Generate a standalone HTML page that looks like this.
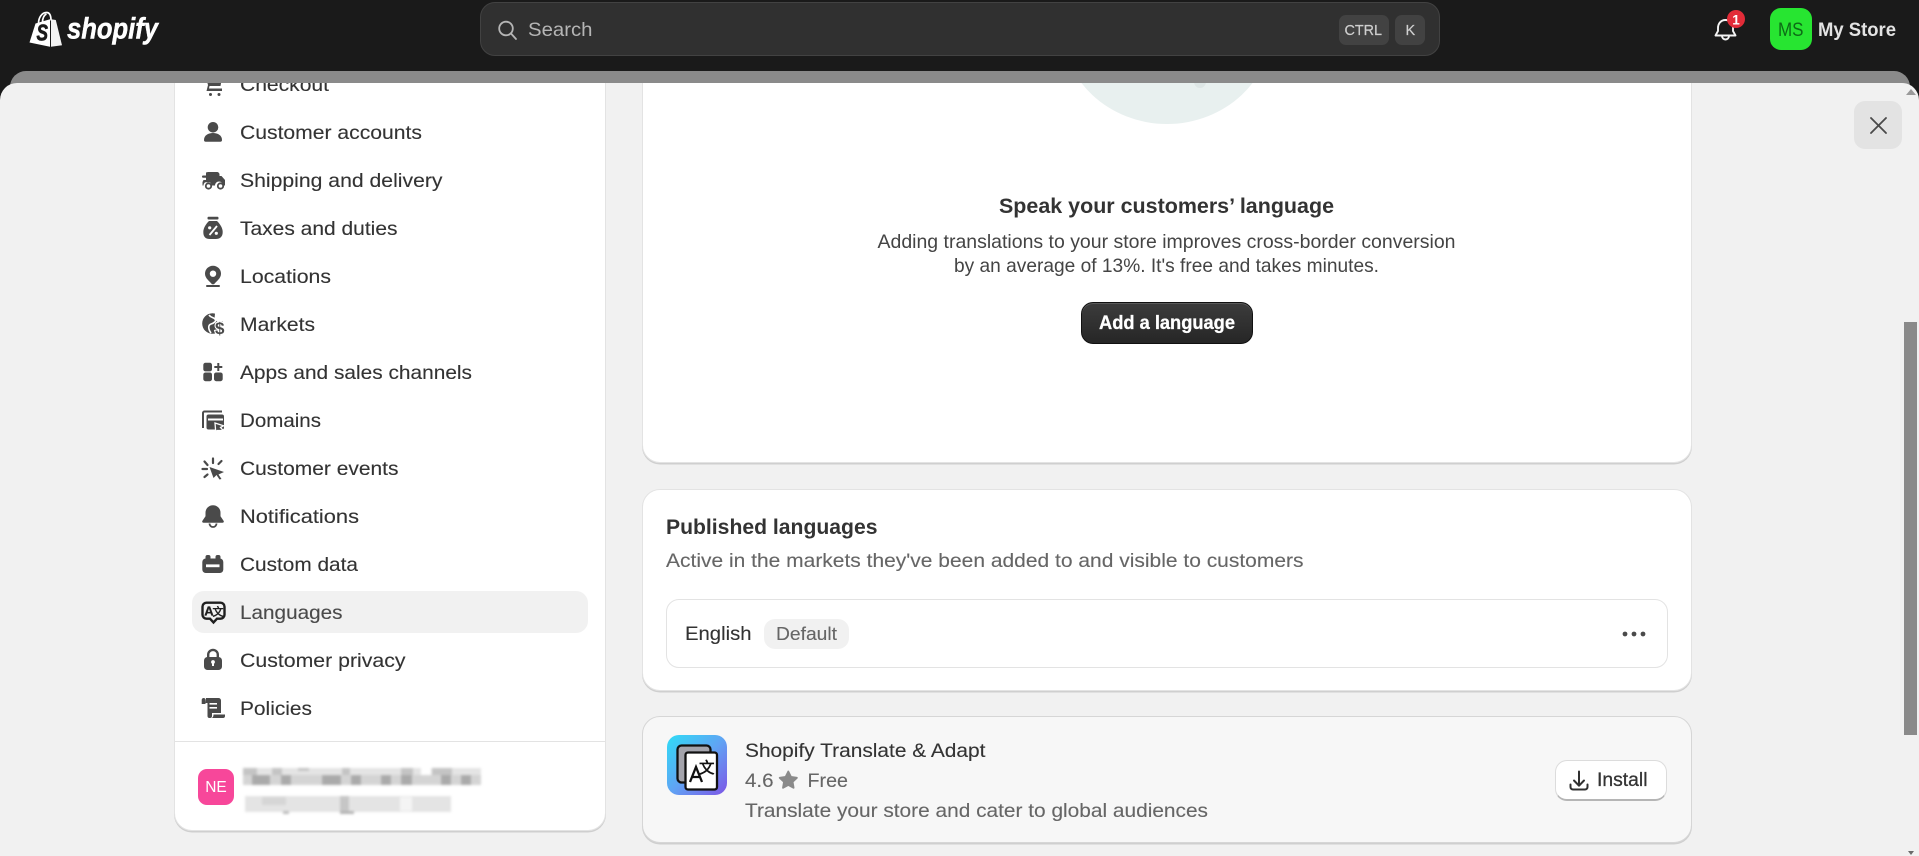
<!DOCTYPE html>
<html lang="en">
<head>
<meta charset="utf-8">
<title>Languages · Settings · My Store</title>
<style>
html,body{margin:0;padding:0;width:1919px;height:856px;overflow:hidden;background:#1a1a1a;font-family:"Liberation Sans",sans-serif}
.abs{position:absolute;box-sizing:border-box}
#panel{left:0;top:83px;width:1919px;height:773px;background:#f1f1f1;border-radius:17px 17px 0 0;overflow:hidden}
#strip{left:10px;top:71px;width:1900px;height:40px;background:#8a8a8a;border-radius:16px 16px 0 0}
.card{background:#fff;border:1px solid #e3e3e3;border-radius:18px;box-shadow:0 1.5px 0 #cfcfcf}
svg{position:absolute;left:0;top:0}
text{font-family:"Liberation Sans","Noto Sans CJK SC",sans-serif;font-size:19.5px;fill:#333;stroke:#333;stroke-width:.12px}
.s{fill:#666;stroke:#666}
.b{font-weight:bold;stroke-width:0}
.w{fill:#fff;stroke:none}
</style>
</head>
<body>
<div class="abs" id="strip"></div>
<div class="abs" id="panel">
  <div class="abs card" style="left:174px;top:-40px;width:432px;height:788px"></div>
  <div class="abs" style="left:192px;top:508px;width:396px;height:42px;background:#f1f1f1;border-radius:12px"></div>
  <div class="abs" style="left:175px;top:658px;width:431px;height:1px;background:#e3e3e3"></div>
  <div class="abs card" style="left:642px;top:-40px;width:1050px;height:420px"></div>
  <div class="abs card" style="left:642px;top:406px;width:1050px;height:202px"></div>
  <div class="abs" style="left:666px;top:516px;width:1002px;height:68.5px;border:1px solid #e3e3e3;border-radius:13px;background:#fff"></div>
  <div class="abs" style="left:764px;top:536px;width:85px;height:30px;border-radius:11px;background:#f1f1f1"></div>
  <div class="abs card" style="left:642px;top:633px;width:1050px;height:127px;background:#f7f7f7;border-color:#d6d6d6"></div>
  <div class="abs" style="left:1081px;top:219px;width:172px;height:42px;border-radius:12px;background:linear-gradient(#3c3c3c,#262626);border:1.5px solid #111;box-shadow:inset 0 1px 0 #5a5a5a"></div>
  <div class="abs" style="left:1555px;top:677px;width:111.5px;height:41px;border-radius:12px;background:#fff;border:1px solid #dcdcdc;border-bottom:2px solid #b5b5b5"></div>
  <div class="abs" style="left:1854px;top:18px;width:48px;height:48px;border-radius:11px;background:#e3e3e3"></div>
  <div class="abs" style="left:1904px;top:239px;width:13px;height:413px;background:#8a8a8a"></div>
</div>
<div class="abs" style="left:480px;top:2px;width:960px;height:54px;border-radius:15px;background:#303030;border:1px solid #424242"></div>
<div class="abs" style="left:1338.5px;top:15px;width:50px;height:30px;border-radius:7px;background:#424242"></div>
<div class="abs" style="left:1395px;top:15px;width:29.5px;height:30px;border-radius:7px;background:#424242"></div>
<div class="abs" style="left:1770px;top:8px;width:42px;height:42px;border-radius:11px;background:#27e531"></div>
<div class="abs" style="left:198px;top:769px;width:36px;height:36px;border-radius:9px;background:#f7479a"></div>

<svg width="1919" height="856" viewBox="0 0 1919 856" xmlns="http://www.w3.org/2000/svg">
<defs>
<clipPath id="c"><rect x="0" y="83" width="1919" height="773"/></clipPath>
<linearGradient id="ag" x1="0" y1="0" x2="1" y2="1"><stop offset="0" stop-color="#2fdcf6"/><stop offset=".5" stop-color="#5fa4f4"/><stop offset="1" stop-color="#7d55e6"/></linearGradient>
<filter id="bl" x="-5%" y="-30%" width="110%" height="160%"><feGaussianBlur stdDeviation="1.2"/></filter>
</defs>

<!-- logo -->
<g>
<path d="M29.500 42.500 35.500 23.500l14.500-4.200V46.700z" fill="#fff"/>
<path d="M51 19.200l4.800.8 6.200 25.200L51 46.700z" fill="#f2f2f2"/>
<path d="M38.500 23.500c0-6 3.500-11 8-11 3.500 0 4.500 4 4.500 8M42.500 22c0-3.500 1.500-7 4-8" fill="none" stroke="#fff" stroke-width="1.700"/>
<text x="36.500" y="40.500" class="b" style="font-size:23px;font-style:italic;fill:#1a1a1a;stroke:#1a1a1a;stroke-width:.7px" textLength="11.500" lengthAdjust="spacingAndGlyphs">S</text>
<text x="67" y="38.500" class="b w" style="font-size:30px;font-style:italic;stroke:#fff;stroke-width:.5px" textLength="91" lengthAdjust="spacingAndGlyphs">shopify</text>
</g>

<!-- search -->
<circle cx="506" cy="28.500" r="6.800" fill="none" stroke="#b5b5b5" stroke-width="1.800"/>
<path d="M511 33.500l5 5.500" stroke="#b5b5b5" stroke-width="1.800" stroke-linecap="round"/>
<text x="528" y="36" style="fill:#b5b5b5;stroke:none" textLength="64.500" lengthAdjust="spacingAndGlyphs">Search</text>
<text x="1344.500" y="35" style="font-size:14.500px;fill:#cfcfcf;stroke:#cfcfcf;stroke-width:.2px" textLength="37.500" lengthAdjust="spacingAndGlyphs">CTRL</text>
<text x="1405.500" y="35" style="font-size:14.500px;fill:#cfcfcf;stroke:#cfcfcf;stroke-width:.2px">K</text>

<!-- bell -->
<path d="M1725.500 20c-5 0-7.500 4-7.500 8v3l-2.500 4.500h20l-2.500-4.500v-3c0-4-2.500-8-7.500-8zM1722 36a3.500 3.500 0 0 0 7 0" fill="none" stroke="#f3f3f3" stroke-width="1.900" stroke-linejoin="round"/>
<circle cx="1736" cy="19" r="9" fill="#e22c38"/>
<text x="1736" y="24.500" class="b w" style="font-size:13.500px" text-anchor="middle">1</text>
<text x="1778" y="36" style="fill:#0d6b16;stroke:none" textLength="25.500" lengthAdjust="spacingAndGlyphs">MS</text>
<text x="1818" y="36" class="b" style="fill:#e3e3e3" textLength="78" lengthAdjust="spacingAndGlyphs">My Store</text>

<g clip-path="url(#c)">
<!-- illustration -->
<ellipse cx="1167" cy="24" rx="106" ry="100" fill="#e8f0ef"/>
<circle cx="1200" cy="82" r="6" fill="#dde6e5"/>

<!-- sidebar text -->
<text x="240" y="91" textLength="89" lengthAdjust="spacingAndGlyphs">Checkout</text>
<text x="240" y="139" textLength="182" lengthAdjust="spacingAndGlyphs">Customer accounts</text>
<text x="240" y="187" textLength="202.500" lengthAdjust="spacingAndGlyphs">Shipping and delivery</text>
<text x="240" y="235" textLength="157.500" lengthAdjust="spacingAndGlyphs">Taxes and duties</text>
<text x="240" y="283" textLength="91" lengthAdjust="spacingAndGlyphs">Locations</text>
<text x="240" y="331" textLength="75" lengthAdjust="spacingAndGlyphs">Markets</text>
<text x="240" y="379" textLength="232" lengthAdjust="spacingAndGlyphs">Apps and sales channels</text>
<text x="240" y="427" textLength="81" lengthAdjust="spacingAndGlyphs">Domains</text>
<text x="240" y="475" textLength="158.500" lengthAdjust="spacingAndGlyphs">Customer events</text>
<text x="240" y="523" textLength="119" lengthAdjust="spacingAndGlyphs">Notifications</text>
<text x="240" y="571" textLength="118" lengthAdjust="spacingAndGlyphs">Custom data</text>
<text x="240" y="619" textLength="102.500" lengthAdjust="spacingAndGlyphs" style="fill:#4a4a4a;stroke:#4a4a4a">Languages</text>
<text x="240" y="667" textLength="165.500" lengthAdjust="spacingAndGlyphs">Customer privacy</text>
<text x="240" y="715" textLength="72" lengthAdjust="spacingAndGlyphs">Policies</text>

<!-- sidebar icons -->
<g fill="#4a4a4a">
<path d="M206 78h16l-1.500 8h-11l-.5 2.500h13v2.500h-15.500l1.500-6z"/><circle cx="210.500" cy="94.500" r="1.500"/><circle cx="219" cy="94.500" r="1.500"/>
<circle cx="213" cy="127.300" r="5.300"/><path d="M204 140c0-4.500 4-7 9-7s9 2.500 9 7a1.700 1.700 0 0 1-1.700 1.700h-14.600A1.700 1.700 0 0 1 204 140z"/>
<path d="M208 172h9a2.500 2.500 0 0 1 2.500 2.500v1.500h2l3.500 4v5.500h-2a3.500 3.500 0 0 0-8 0h-3.500a3.500 3.500 0 0 0-8 0h-1v-4h3.500v-9z"/><rect x="202" y="175.500" width="9" height="2.200" rx="1"/><rect x="203" y="180" width="7" height="2.200" rx="1"/><circle cx="208.500" cy="186" r="2.700" fill="none" stroke="#4a4a4a" stroke-width="1.800"/><circle cx="220.500" cy="186" r="2.700" fill="none" stroke="#4a4a4a" stroke-width="1.800"/>
<rect x="207.500" y="216.700" width="11" height="2.800" rx="1"/><path d="M209 221h8c3 3 5.700 7 5.700 11 0 5-3 7-7 7h-6c-4 0-6.400-2-6.400-7 0-4 2.700-8 5.700-11z"/>
<path d="M213 265.700a8 8 0 0 0-8 8c0 4.800 5 7.800 7 10.500h2c2-2.700 7-5.700 7-10.500a8 8 0 0 0-8-8z"/><rect x="206" y="285" width="14" height="2" rx="1"/>
<circle cx="212.500" cy="323.500" r="10.300"/>
<rect x="203.300" y="362.700" width="8.700" height="8.700" rx="2.200"/><rect x="203.300" y="372.500" width="8.700" height="8.700" rx="2.200"/><rect x="214" y="372.500" width="8.700" height="8.700" rx="2.200"/><path d="M217.300 363h2v3h3v2h-3v3h-2v-3h-3v-2h3z"/>
<path d="M203 428v-15a1.500 1.500 0 0 1 1.500-1.500h17.500" fill="none" stroke="#4a4a4a" stroke-width="2"/><rect x="206.500" y="414.500" width="17.500" height="15" rx="2"/>
<path d="M209.500 467l14.500 5-5.500 2.500 3 4.500-2 .5-3-4.500-3 3z"/>
<path d="M213 505.200a7.500 7.500 0 0 0-7.500 7.500v3.500l-3.200 4.800c-.4 1 .2 1.700 1.200 1.700h19c1 0 1.600-.7 1.200-1.700l-3.200-4.800v-3.500a7.500 7.500 0 0 0-7.500-7.500z"/><path d="M209.500 523.500a3.500 3.500 0 0 0 7 0" fill="none" stroke="#4a4a4a" stroke-width="1.800"/>
<rect x="202.300" y="558.500" width="21" height="14.500" rx="3.500"/><rect x="205.500" y="555" width="5" height="6" rx="2"/><rect x="215.500" y="555" width="5" height="6" rx="2"/>
<rect x="204" y="657" width="18" height="13" rx="3.500"/><path d="M208.200 658v-3.300a4.800 4.800 0 0 1 9.600 0v3.300" fill="none" stroke="#4a4a4a" stroke-width="2.400"/>
<path d="M206 698h12.500a2.500 2.500 0 0 1 2.500 2.500V713h-9v3a2 2 0 0 1-2 2h-.5a2 2 0 0 1-2-2V703h-2z"/><path d="M203.500 698a2 2 0 0 1 2 2v4h-3.800v-4a2 2 0 0 1 1.800-2z"/><path d="M213.500 714.500H225v1.500a2 2 0 0 1-2 2h-11.200c1-.5 1.700-1.500 1.700-3.500z"/>
</g>
<g fill="none" stroke="#fff">
<path d="M209.500 235l7.500-9" stroke-width="1.800"/>
<path d="M208 419.500h15" stroke-width="2"/>
<path d="M209 315c2 3 4 2 6 4s-1 4 -4 5-3 5 0 9" stroke-width="1.600"/>
<path d="M215 423l8.500 2.800-3 1.600 2.700 3.100h-6l-1.500 1z" stroke-width="1.300" fill="#4a4a4a"/>
<path d="M206 565.800h13.500" stroke-width="2.800"/>
</g>
<g fill="#fff"><circle cx="209.700" cy="227.800" r="1.600"/><circle cx="216.300" cy="233.300" r="1.600"/><circle cx="213" cy="273.700" r="3.200"/><circle cx="213" cy="662" r="1.900"/><rect x="212" y="662" width="2" height="4"/><rect x="209.500" y="703" width="7.500" height="1.600"/><rect x="209.500" y="707" width="7.500" height="1.600"/></g>
<path d="M215 313.200a10.300 10.300 0 0 1 8 8l-5 1-3.500-3z" fill="#fff"/>
<text x="215" y="334" class="b" style="font-size:17px;fill:#4a4a4a;stroke:#fff;stroke-width:2.200px;paint-order:stroke">$</text>
<path d="M204.500 461.500l3 3.500M213 458.500v4.500M221.500 461l-3 3M202.500 469h4.500M204.500 477l3-2.500" stroke="#4a4a4a" stroke-width="2.200" stroke-linecap="round" fill="none"/>
<path d="M206.500 602.700h14a4 4 0 0 1 4 4v8a4 4 0 0 1-4 4h-3.500l-3.500 3.800-3.500-3.800h-3.500a4 4 0 0 1-4-4v-8a4 4 0 0 1 4-4z" fill="none" stroke="#1f1f1f" stroke-width="2.400"/>
<text x="204.200" y="615.500" class="b" style="font-size:13px;fill:#1f1f1f;stroke:#1f1f1f;stroke-width:.3px">A</text>
<text x="212.500" y="615.500" style="font-size:11px;fill:#1f1f1f;stroke:#1f1f1f;stroke-width:.5px">文</text>

<!-- profile -->
<text x="216" y="792" text-anchor="middle" class="w" style="font-size:15.500px">NE</text>
<g filter="url(#bl)">
<rect x="243" y="768" width="238" height="7" fill="#e4e4e4"/>
<rect x="243" y="775" width="238" height="10" fill="#d4d4d4"/>
<rect x="421" y="767" width="10" height="8" fill="#fff"/>
<g fill="#aaa"><rect x="252" y="775" width="18" height="10"/><rect x="281" y="775" width="10" height="10"/><rect x="322" y="775" width="19" height="10"/><rect x="351" y="775" width="10" height="10"/><rect x="381" y="775" width="10" height="10"/><rect x="401" y="775" width="11" height="10"/><rect x="441" y="775" width="10" height="10"/><rect x="461" y="775" width="10" height="10"/></g>
<g fill="#c4c4c4"><rect x="243" y="768" width="14" height="7"/><rect x="272" y="768" width="10" height="7"/><rect x="298" y="768" width="11" height="3"/><rect x="342" y="768" width="8" height="7"/><rect x="401" y="768" width="12" height="7"/><rect x="432" y="768" width="20" height="7"/></g>
<rect x="245" y="796" width="206" height="16" fill="#e4e4e4"/>
<rect x="340" y="796" width="9" height="16" fill="#c6c6c6"/>
<rect x="400" y="797" width="12" height="14" fill="#f4f4f4"/>
<rect x="262" y="797" width="24" height="8" fill="#d6d6d6"/>
<rect x="283" y="811" width="6" height="3" fill="#bdbdbd"/>
<rect x="340" y="811" width="14" height="3" fill="#b5b5b5"/>
</g>

<!-- hero -->
<text x="999" y="213" class="b" style="font-size:21px" textLength="335" lengthAdjust="spacingAndGlyphs">Speak your customers’ language</text>
<text x="877.500" y="248" style="fill:#444;stroke:none" textLength="578" lengthAdjust="spacingAndGlyphs">Adding translations to your store improves cross-border conversion</text>
<text x="954" y="272" style="fill:#444;stroke:none" textLength="425" lengthAdjust="spacingAndGlyphs">by an average of 13%. It's free and takes minutes.</text>
<text x="1099" y="329" class="b w" style="stroke:#fff;stroke-width:.3px" textLength="136" lengthAdjust="spacingAndGlyphs">Add a language</text>

<!-- published -->
<text x="666" y="534" class="b" style="font-size:21px" textLength="211.500" lengthAdjust="spacingAndGlyphs">Published languages</text>
<text x="666" y="567" class="s" textLength="637.500" lengthAdjust="spacingAndGlyphs">Active in the markets they've been added to and visible to customers</text>
<text x="685" y="640" textLength="66.500" lengthAdjust="spacingAndGlyphs">English</text>
<text x="776" y="640" class="s" style="font-size:18.500px" textLength="61" lengthAdjust="spacingAndGlyphs">Default</text>
<g fill="#4a4a4a"><circle cx="1625" cy="634" r="2.400"/><circle cx="1634" cy="634" r="2.400"/><circle cx="1643" cy="634" r="2.400"/></g>

<!-- app -->
<rect x="667" y="735" width="60" height="60" rx="12" fill="url(#ag)"/>
<rect x="677.500" y="745.500" width="33" height="37" rx="4" fill="#a4a4ac" stroke="#111" stroke-width="2.300"/>
<rect x="685.500" y="752.500" width="31.500" height="37" rx="2.500" fill="#fff" stroke="#111" stroke-width="2.300"/>
<path d="M690 782l6-15 6 15M692.500 777h7" fill="none" stroke="#111" stroke-width="2.300"/>
<text x="699" y="773" style="font-size:15.500px;fill:#111;stroke:#111;stroke-width:.5px">文</text>
<text x="745" y="757" textLength="240.500" lengthAdjust="spacingAndGlyphs">Shopify Translate &amp; Adapt</text>
<text x="745" y="787" class="s" textLength="28.500" lengthAdjust="spacingAndGlyphs">4.6</text>
<path d="M788.300 771.500l2.700 5.400 5.900.9-4.300 4.100 1 5.900-5.300-2.800-5.300 2.800 1-5.900-4.300-4.100 5.900-.9z" fill="#8a8a8a" stroke="#8a8a8a" stroke-width="1.800" stroke-linejoin="round"/>
<text x="807.500" y="787" class="s" textLength="40.500" lengthAdjust="spacingAndGlyphs">Free</text>
<text x="745" y="817" class="s" textLength="463" lengthAdjust="spacingAndGlyphs">Translate your store and cater to global audiences</text>
<path d="M1579 771.500v14M1574 780.500l5 5.200 5-5.200M1570.500 784.500v2.500a2.500 2.500 0 0 0 2.500 2.500h12a2.500 2.500 0 0 0 2.500-2.500v-2.500" fill="none" stroke="#303030" stroke-width="2" stroke-linecap="round" stroke-linejoin="round"/>
<text x="1597" y="786" style="stroke-width:.3px" textLength="50.500" lengthAdjust="spacingAndGlyphs">Install</text>

<!-- close + scrollbar arrows -->
<path d="M1871 118l15 15M1886 118l-15 15" stroke="#4a4a4a" stroke-width="1.800" stroke-linecap="round"/>
<path d="M1911 89l5 6h-10z" fill="#9a9a9a"/>
<path d="M1908 851h6l-3 4z" fill="#6a6a6a"/>
</g>
</svg>
</body>
</html>
